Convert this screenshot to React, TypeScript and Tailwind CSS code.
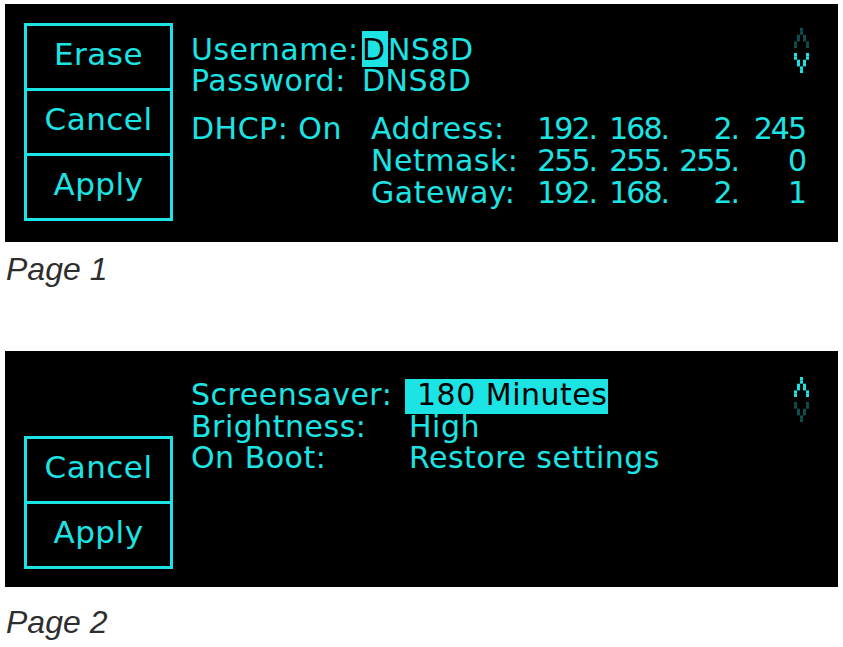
import React from 'react'

// pixel layout of the scroll arrows (5 x 6 grid)
const UP_PIXELS = [[2, 0], [2, 1], [1, 2], [3, 2], [1, 3], [3, 3], [0, 4], [4, 4], [0, 5], [4, 5]]
const DOWN_PIXELS = UP_PIXELS.map(([x, y]) => [x, 5 - y])

function PixelArrow({ pixels, dim }: { pixels: number[][]; dim: boolean }) {
  return (
    <svg width="15" height="20" viewBox="0 0 15 20" className="block">
      {pixels.map(([x, y]) => (
        <rect key={`${x}-${y}`} x={x * 3} y={y * 3.35} width="3" height="3.35" fill={dim ? '#0d4f4f' : '#1de4e4'} />
      ))}
    </svg>
  )
}

function Arrows({ upActive, className }: { upActive: boolean; className: string }) {
  return (
    <div className={`flex flex-col gap-[5px] ${className}`}>
      <PixelArrow pixels={UP_PIXELS} dim={!upActive} />
      <PixelArrow pixels={DOWN_PIXELS} dim={upActive} />
    </div>
  )
}

function ButtonStack({ labels, className }: { labels: string[]; className: string }) {
  return (
    <div className={`w-[149px] shrink-0 border-[3px] border-[#1de4e4] flex flex-col text-[31px] ${className}`}>
      {labels.map((label, i) => (
        <div
          key={label}
          className={`h-[62px] flex items-center justify-center pb-[7px] leading-[30px] ${i > 0 ? 'border-t-[3px] border-[#1de4e4] h-[65px]' : ''}`}
        >
          {label}
        </div>
      ))}
    </div>
  )
}

function Caption({ children, className }: { children: React.ReactNode; className: string }) {
  return (
    <div className={`pl-[1px] text-[32px] leading-[37px] italic font-light text-[#2e2e2e] font-['Liberation_Sans',Arial,sans-serif] ${className}`}>
      {children}
    </div>
  )
}

const NETWORK = [
  { label: 'Address:', octets: ['192.', '168.', '2.', '245'] },
  { label: 'Netmask:', octets: ['255.', '255.', '255.', '0'] },
  { label: 'Gateway:', octets: ['192.', '168.', '2.', '1'] },
]
const OCTET_WIDTHS = ['w-[73px]', 'w-[72px]', 'w-[70px]', 'w-[67px]']

function Page1() {
  return (
    <div className="flex items-start h-[238px] bg-black pl-[19px] pr-[29px] text-[30px] tracking-[0.5px] text-[#1de4e4]">
      <ButtonStack labels={['Erase', 'Cancel', 'Apply']} className="mt-[19px]" />
      <div className="ml-[18px] mt-[30px] flex-1 min-w-0 flex flex-col">
        <div className="flex leading-[31px]">
          <span className="w-[171px] shrink-0">Username:</span>
          <span className="whitespace-nowrap">
            <span className="inline-block w-[26px] pt-[3px] -mt-[3px] pb-[2px] -mb-[2px] bg-[#1de4e4] text-black">D</span>
            NS8D
          </span>
        </div>
        <div className="flex leading-[31px]">
          <span className="w-[171px] shrink-0">Password:</span>
          <span>DNS8D</span>
        </div>
        <div className="flex mt-[17px] leading-[32px] whitespace-nowrap">
          <div className="w-[180px] shrink-0">DHCP: On</div>
          <div className="flex flex-col">
            {NETWORK.map((row) => (
              <div key={row.label} className="flex">
                <span className="w-[152px] shrink-0">{row.label}</span>
                {row.octets.map((o, i) => (
                  <span key={i} className={`${OCTET_WIDTHS[i]} shrink-0 text-right tracking-[-2px]`}>
                    {o}
                  </span>
                ))}
              </div>
            ))}
          </div>
        </div>
      </div>
      <Arrows upActive={false} className="mt-[24px]" />
    </div>
  )
}

function Page2() {
  return (
    <div className="flex items-start h-[236px] bg-black pl-[19px] pr-[29px] text-[30px] tracking-[0.5px] text-[#1de4e4]">
      <ButtonStack labels={['Cancel', 'Apply']} className="mt-[85px]" />
      <div className="ml-[18px] mt-[28px] flex-1 min-w-0 flex flex-col leading-[31.5px] whitespace-nowrap">
        <div className="flex">
          <span className="w-[214px] shrink-0">Screensaver:</span>
          <span className="w-[203px] pl-[12px] pb-[3px] -mb-[3px] bg-[#1de4e4] text-black">180 Minutes</span>
        </div>
        <div className="flex">
          <span className="w-[214px] shrink-0">Brightness:</span>
          <span className="pl-[4px]">High</span>
        </div>
        <div className="flex">
          <span className="w-[214px] shrink-0">On Boot:</span>
          <span className="pl-[4px]">Restore settings</span>
        </div>
      </div>
      <Arrows upActive={true} className="mt-[26px]" />
    </div>
  )
}

export default function App() {
  return (
    <div className="min-h-screen bg-white pt-[4px] px-[5px] font-['DejaVu_Sans',sans-serif]">
      <Page1 />
      <Caption className="mt-[9px]">Page 1</Caption>
      <div className="mt-[63px]">
        <Page2 />
      </div>
      <Caption className="mt-[17px]">Page 2</Caption>
    </div>
  )
}
